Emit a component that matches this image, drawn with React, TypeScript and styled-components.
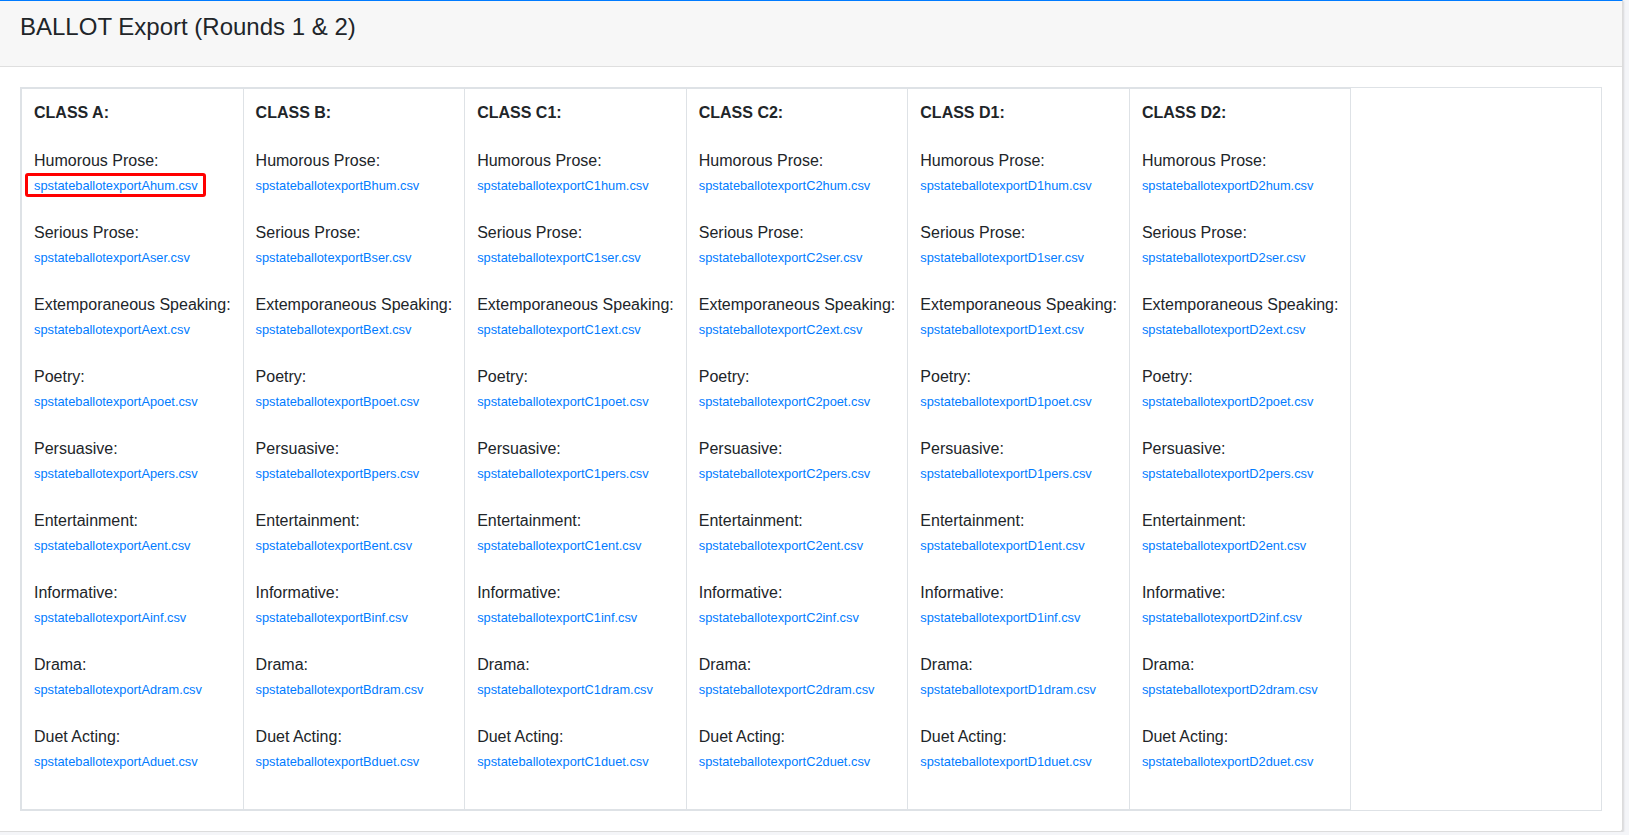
import React from "react";
import styled, { createGlobalStyle } from "styled-components";

const classes = ["A", "B", "C1", "C2", "D1", "D2"];

const events = [
  { label: "Humorous Prose:", code: "hum" },
  { label: "Serious Prose:", code: "ser" },
  { label: "Extemporaneous Speaking:", code: "ext" },
  { label: "Poetry:", code: "poet" },
  { label: "Persuasive:", code: "pers" },
  { label: "Entertainment:", code: "ent" },
  { label: "Informative:", code: "inf" },
  { label: "Drama:", code: "dram" },
  { label: "Duet Acting:", code: "duet" },
];

const App = () => {
  return (
    <>
      <GlobalStyle />
      <Card>
        <CardHeader>
          <Title>BALLOT Export (Rounds 1 &amp; 2)</Title>
        </CardHeader>
        <CardBody>
          <TableFrame>
            <ExportTable>
              <tbody>
                <tr>
                  {classes.map((cls) => (
                    <Cell key={cls}>
                      <ClassTitle>CLASS {cls}:</ClassTitle>
                      {events.map((ev) => (
                        <EventBlock key={ev.code}>
                          <EventLabel>{ev.label}</EventLabel>
                          <LinkLine>
                            <FileLink
                              href="#"
                              $highlight={cls === "A" && ev.code === "hum"}
                            >
                              spstateballotexport{cls}
                              {ev.code}.csv
                            </FileLink>
                          </LinkLine>
                        </EventBlock>
                      ))}
                    </Cell>
                  ))}
                </tr>
              </tbody>
            </ExportTable>
          </TableFrame>
        </CardBody>
      </Card>
    </>
  );
};

const GlobalStyle = createGlobalStyle`
  html, body {
    margin: 0;
    padding: 0;
    background-color: #f4f5f8;
    font-family: "Liberation Sans", Arial, Helvetica, sans-serif;
    font-size: 16px;
    line-height: 1.5;
    color: #212529;
  }
  * {
    box-sizing: border-box;
  }
`;

const Card = styled.section`
  width: 1623px;
  background-color: #fff;
  border-top: 1px solid #007bff;
  border-right: 1px solid #dcdcdc;
  border-bottom: 1px solid #dcdcdc;
  border-bottom-right-radius: 3px;
  box-shadow: 1px 1px 2px rgba(0, 0, 0, 0.12);
`;

const CardHeader = styled.div`
  background-color: #f7f7f7;
  border-bottom: 1px solid #dfdfdf;
  padding: 12px 20px 12px;
`;

const Title = styled.h4`
  margin: 0 0 12px;
  font-size: 24px;
  font-weight: 500;
  line-height: 1.2;
  color: #212529;
`;

const CardBody = styled.div`
  padding: 20px;
`;

const TableFrame = styled.div`
  border: 1px solid #dee2e6;
`;

const ExportTable = styled.table`
  border-collapse: collapse;
`;

const Cell = styled.td`
  border: 1px solid #dee2e6;
  padding: 12px;
  vertical-align: top;
  white-space: nowrap;
`;

const ClassTitle = styled.div`
  font-weight: 700;
  margin-bottom: 24px;
`;

const EventBlock = styled.div`
  margin-bottom: 24px;
`;

const EventLabel = styled.div``;

const LinkLine = styled.div``;

const FileLink = styled.a<{ $highlight?: boolean }>`
  position: relative;
  font-size: 80%;
  color: #007bff;
  text-decoration: none;
  ${({ $highlight }) =>
    $highlight &&
    `
    &::after {
      content: "";
      position: absolute;
      top: -5px;
      bottom: -4px;
      left: -9px;
      right: -8px;
      border: 3.5px solid #ff0000;
      border-radius: 3px;
    }
  `}
`;

export default App;
